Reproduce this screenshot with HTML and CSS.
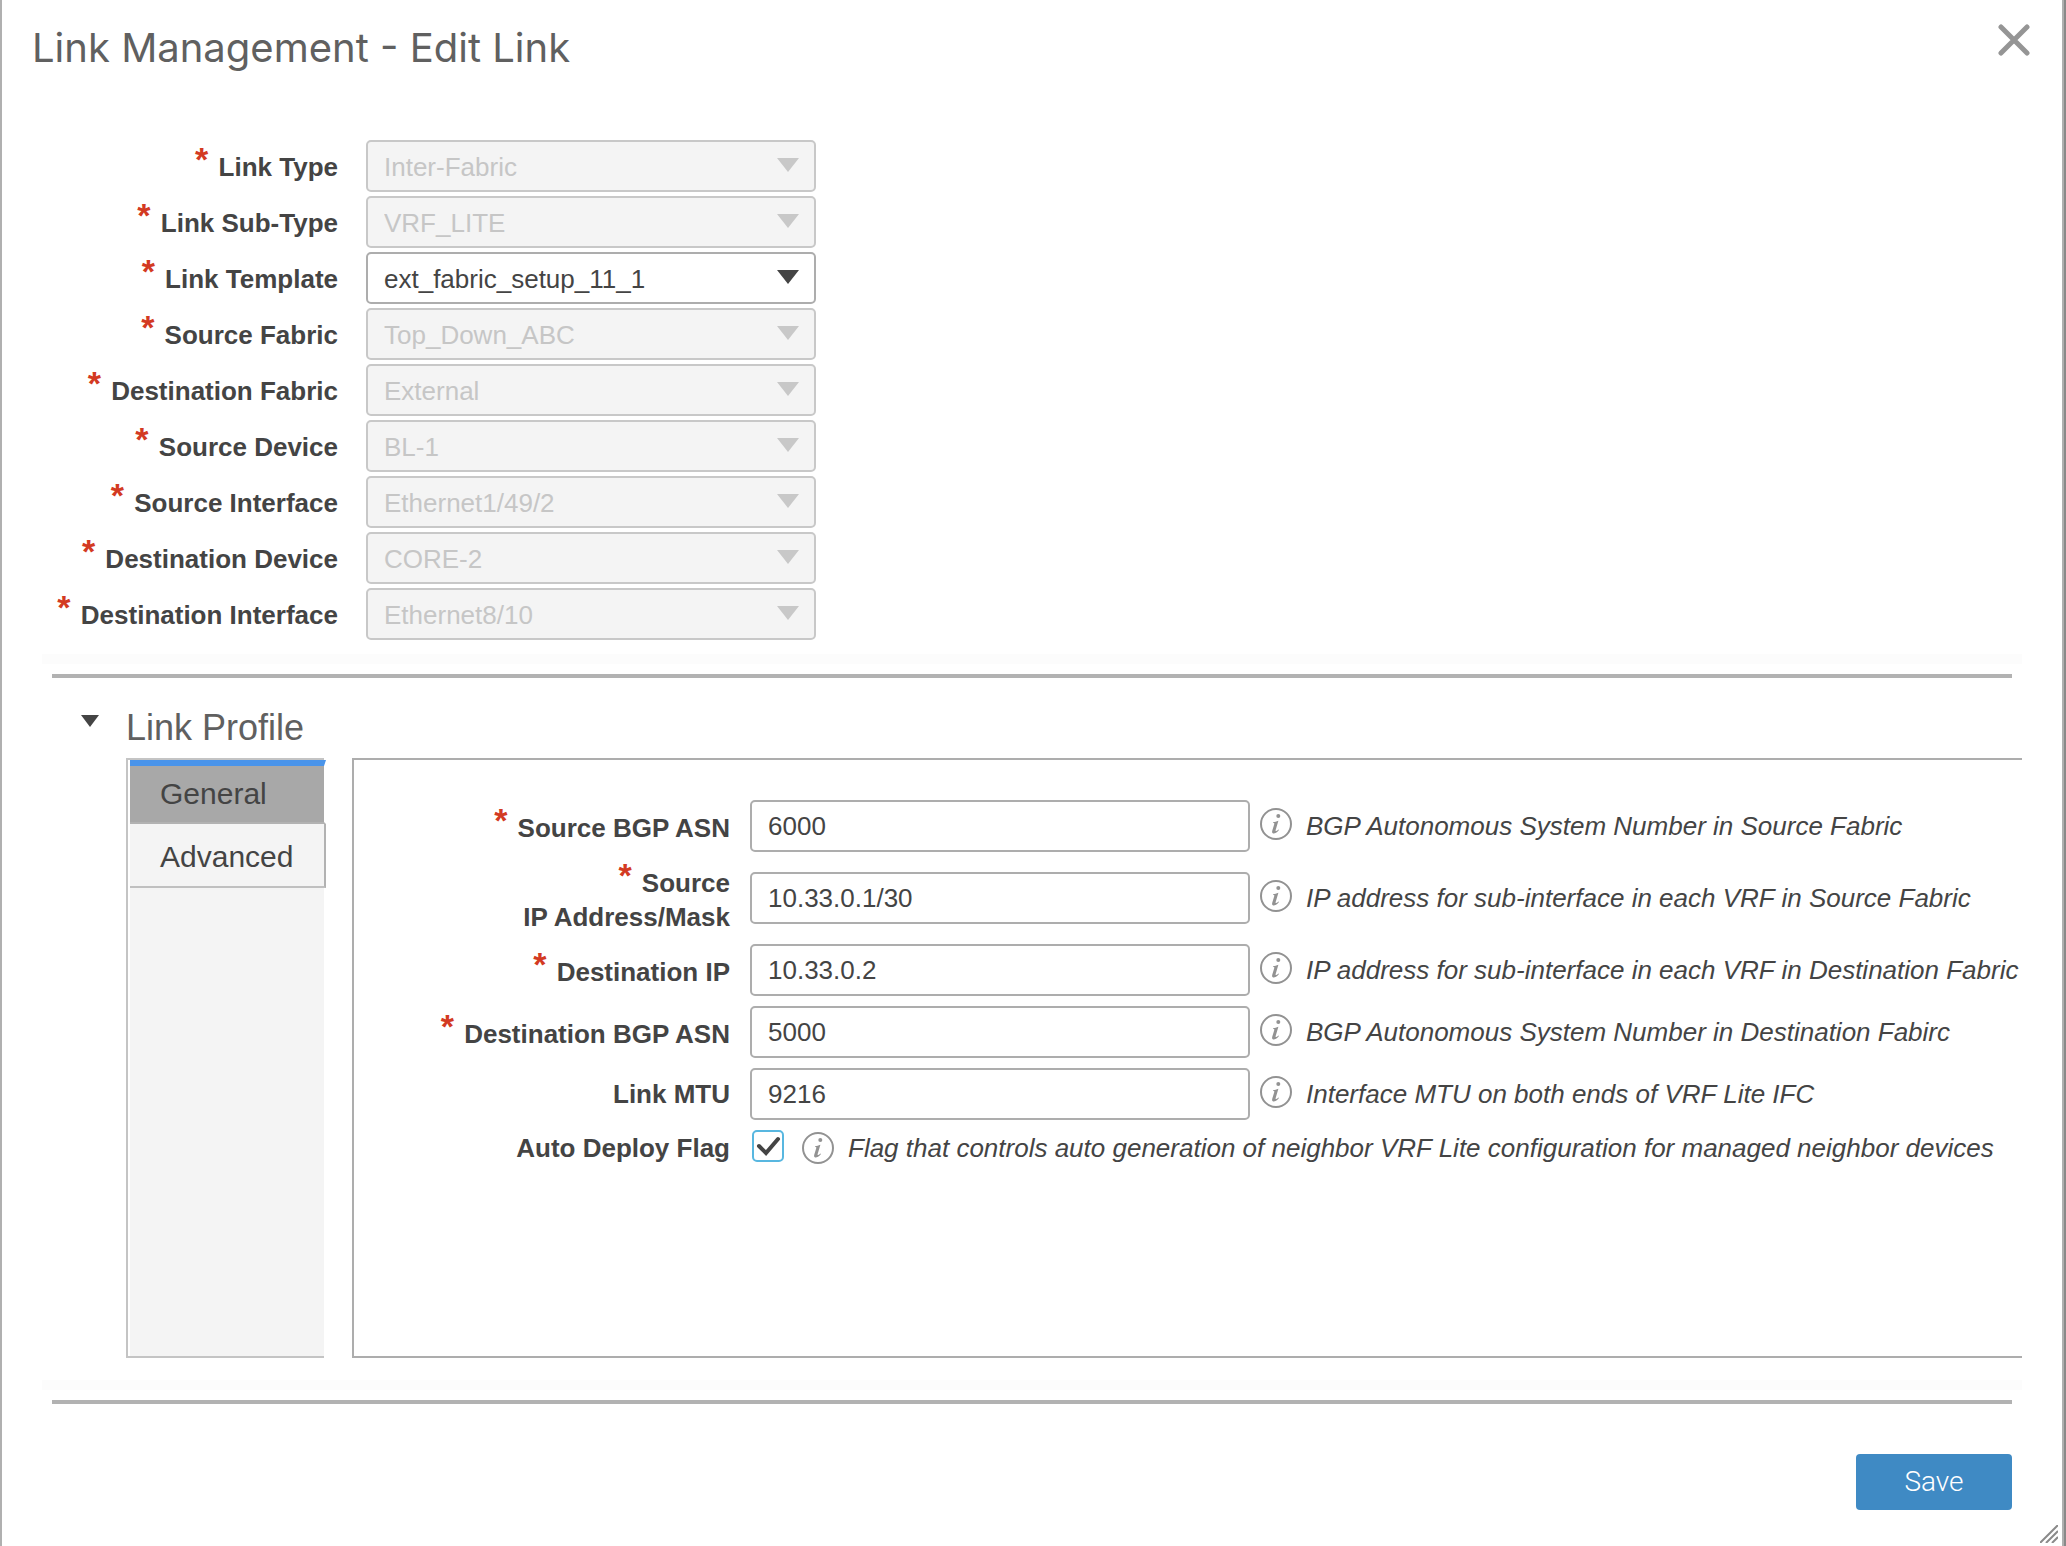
FILE: index.html
```
<!DOCTYPE html>
<html lang="en">
<head>
    <meta charset="utf-8">
    <title>Link Management - Edit Link</title>
    <link rel="stylesheet" href="styles.css">
</head>
<body>
    <svg width="0" height="0" class="icon-defs" aria-hidden="true">
        <symbol id="info" viewBox="0 0 32 32">
            <circle cx="16" cy="16" r="15" fill="#fff" stroke="#929292" stroke-width="2"/>
            <circle cx="18.3" cy="8" r="2" fill="#929292"/>
            <path d="M13.2 14.2C14.8 14.2 16.4 13.7 18.4 12.8L15.6 22.3C15.3 23.4 16 23.6 18.6 21.4L19 22C16.6 24.8 14.8 25.7 13.2 25.5C11.9 25.2 11.9 24 12.3 22.6L14.3 16C14.5 15.2 14.2 15 13 15Z" fill="#929292"/>
        </symbol>
    </svg>

    <div class="dialog">
        <div class="dialog-header">
            <h1>Link Management - Edit Link</h1>
            <button type="button" class="close-button" aria-label="Close">
                <svg width="32" height="32" viewBox="0 0 32 32"><path d="M3 3L29 29M29 3L3 29" stroke="#959595" stroke-width="5" stroke-linecap="round"/></svg>
            </button>
        </div>

        <form class="link-form">
            <div class="link-row">
                <label for="linkType"><span class="star">*</span> Link Type</label>
                <div class="select-box disabled"><select id="linkType" disabled><option>Inter-Fabric</option></select></div>
            </div>
            <div class="link-row">
                <label for="linkSubType"><span class="star">*</span> Link Sub-Type</label>
                <div class="select-box disabled"><select id="linkSubType" disabled><option>VRF_LITE</option></select></div>
            </div>
            <div class="link-row">
                <label for="linkTemplate"><span class="star">*</span> Link Template</label>
                <div class="select-box"><select id="linkTemplate"><option>ext_fabric_setup_11_1</option></select></div>
            </div>
            <div class="link-row">
                <label for="sourceFabric"><span class="star">*</span> Source Fabric</label>
                <div class="select-box disabled"><select id="sourceFabric" disabled><option>Top_Down_ABC</option></select></div>
            </div>
            <div class="link-row">
                <label for="destFabric"><span class="star">*</span> Destination Fabric</label>
                <div class="select-box disabled"><select id="destFabric" disabled><option>External</option></select></div>
            </div>
            <div class="link-row">
                <label for="sourceDevice"><span class="star">*</span> Source Device</label>
                <div class="select-box disabled"><select id="sourceDevice" disabled><option>BL-1</option></select></div>
            </div>
            <div class="link-row">
                <label for="sourceInterface"><span class="star">*</span> Source Interface</label>
                <div class="select-box disabled"><select id="sourceInterface" disabled><option>Ethernet1/49/2</option></select></div>
            </div>
            <div class="link-row">
                <label for="destDevice"><span class="star">*</span> Destination Device</label>
                <div class="select-box disabled"><select id="destDevice" disabled><option>CORE-2</option></select></div>
            </div>
            <div class="link-row">
                <label for="destInterface"><span class="star">*</span> Destination Interface</label>
                <div class="select-box disabled"><select id="destInterface" disabled><option>Ethernet8/10</option></select></div>
            </div>
        </form>

        <div class="band"></div>
        <hr class="divider">

        <div class="profile-header">
            <button type="button" class="toggle-button" aria-label="Toggle Link Profile" aria-expanded="true">
                <svg width="18" height="12" viewBox="0 0 18 12"><path d="M0 0H18L9 12Z" fill="#444"/></svg>
            </button>
            <h2>Link Profile</h2>
        </div>

        <div class="profile">
            <div class="tabs">
                <button type="button" class="tab active">General</button>
                <button type="button" class="tab">Advanced</button>
            </div>

            <form class="panel">
                <div class="panel-row">
                    <label for="sourceAsn"><span class="star">*</span> Source BGP ASN</label>
                    <input type="text" id="sourceAsn" class="text-input" value="6000">
                    <svg class="info"><use href="#info"/></svg>
                    <span class="hint">BGP Autonomous System Number in Source Fabric</span>
                </div>
                <div class="panel-row">
                    <label for="sourceIp"><span class="star">*</span> Source<br>IP Address/Mask</label>
                    <input type="text" id="sourceIp" class="text-input" value="10.33.0.1/30">
                    <svg class="info"><use href="#info"/></svg>
                    <span class="hint">IP address for sub-interface in each VRF in Source Fabric</span>
                </div>
                <div class="panel-row">
                    <label for="destIp"><span class="star">*</span> Destination IP</label>
                    <input type="text" id="destIp" class="text-input" value="10.33.0.2">
                    <svg class="info"><use href="#info"/></svg>
                    <span class="hint">IP address for sub-interface in each VRF in Destination Fabric</span>
                </div>
                <div class="panel-row">
                    <label for="destAsn"><span class="star">*</span> Destination BGP ASN</label>
                    <input type="text" id="destAsn" class="text-input" value="5000">
                    <svg class="info"><use href="#info"/></svg>
                    <span class="hint">BGP Autonomous System Number in Destination Fabirc</span>
                </div>
                <div class="panel-row">
                    <label for="linkMtu">Link MTU</label>
                    <input type="text" id="linkMtu" class="text-input" value="9216">
                    <svg class="info"><use href="#info"/></svg>
                    <span class="hint">Interface MTU on both ends of VRF Lite IFC</span>
                </div>
                <div class="panel-row check-row">
                    <label for="autoDeploy">Auto Deploy Flag</label>
                    <span class="check-box">
                        <input type="checkbox" id="autoDeploy" checked>
                        <svg width="32" height="32" viewBox="0 0 32 32"><path d="M7 16L14 23L26 9" fill="none" stroke="#444" stroke-width="4" stroke-linecap="round"/></svg>
                    </span>
                    <svg class="info"><use href="#info"/></svg>
                    <span class="hint">Flag that controls auto generation of neighbor VRF Lite configuration for managed neighbor devices</span>
                </div>
            </form>
        </div>

        <div class="band"></div>
        <hr class="divider">

        <div class="dialog-footer">
            <button type="button" class="save-button">Save</button>
        </div>

        <svg class="resize-handle" width="18" height="18" viewBox="0 0 18 18"><path d="M0 18L18 0M6 18L18 6M12 18L18 12" stroke="#8a8a8a" stroke-width="2"/></svg>
    </div>
</body>
</html>
```
FILE: styles.css
```
* {
    box-sizing: border-box;
}

body {
    margin: 0;
    padding-right: 2px;
    background: #898989;
    color: #444;
    font-family: "Liberation Sans", Arial, sans-serif;
    font-size: 26px;
    line-height: 34px;
}

h1, h2 {
    margin: 0;
    color: #606060;
    font-weight: 400;
}

button, input, select {
    margin: 0;
    padding: 0;
    border: none;
    background: none;
    color: inherit;
    font: inherit;
}

svg {
    display: block;
}

.icon-defs {
    position: absolute;
}

.dialog {
    position: relative;
    display: flex;
    flex-direction: column;
    min-height: 100vh;
    border-left: 2px solid #b0b0b0;
    border-right: 2px solid #b0b0b0;
    background: #fff;
}

.dialog-header {
    display: flex;
    justify-content: space-between;
    align-items: flex-start;
    padding: 24px 32px 0 30px;
}

.dialog-header h1 {
    font-family: Inter, sans-serif;
    font-size: 40px;
    line-height: 48px;
}

/* link settings */
.link-form {
    display: flex;
    flex-direction: column;
    gap: 4px;
    padding: 68px 50px 14px;
}

.link-row {
    display: flex;
    align-items: center;
    gap: 28px;
}

label {
    font-weight: 700;
    text-align: right;
}

.link-row label {
    width: 286px;
    padding-bottom: 2px;
    white-space: nowrap;
}

.star {
    margin-right: 3px;
    color: #d33a22;
    font-size: 34px;
    line-height: 26px;
    vertical-align: 5px;
}

.select-box {
    position: relative;
    width: 450px;
}

.select-box::after {
    content: "";
    position: absolute;
    top: 18px;
    right: 17px;
    border: 11px solid transparent;
    border-top: 14px solid #444;
    border-bottom: none;
    pointer-events: none;
}

.select-box.disabled::after {
    border-top-color: #c8c8c8;
}

select {
    appearance: none;
    display: block;
    width: 100%;
    height: 52px;
    padding: 1px 48px 0 16px;
    border: 2px solid #adadad;
    border-radius: 5px;
    background: #fff;
}

select:disabled {
    border-color: #c8c8c8;
    background: #f4f4f4;
    color: #c6c6c6;
    opacity: 1;
}

.band {
    height: 10px;
    margin: 0 40px;
    background: #fcfcfc;
}

.divider {
    width: auto;
    height: 4px;
    margin: 10px 50px 0;
    border: none;
    background: #b2b2b2;
}

/* link profile */
.profile-header {
    display: flex;
    gap: 27px;
    padding: 28px 50px 8px 79px;
}

.profile-header h2 {
    font-size: 36px;
    line-height: 44px;
}

.toggle-button {
    align-self: flex-start;
    padding-top: 9px;
}

.profile {
    display: flex;
    flex: 1;
    gap: 28px;
    margin: 0 40px 22px 124px;
}

.tabs {
    flex: none;
    width: 198px;
    padding-left: 2px;
    border: 2px solid #c4c4c4;
    border-right: none;
    background: linear-gradient(90deg, #fff 2px, #f4f4f4 2px);
}

.tab {
    display: block;
    width: 196px;
    height: 64px;
    padding: 4px 0 0 30px;
    border-right: 2px solid #b2b2b2;
    border-bottom: 2px solid #c0c0c0;
    font-size: 30px;
    text-align: left;
}

.tab.active {
    padding-top: 0;
    border-top: 6px solid #4a94ea;
    border-right-color: transparent;
    border-bottom-color: #b2b2b2;
    background: #a8a8a8;
    background-clip: padding-box;
}

.panel {
    flex: 1;
    min-width: 0;
    padding-top: 35px;
    border: 2px solid #adadad;
    border-right: none;
}

.panel-row {
    display: flex;
    align-items: center;
    padding: 5px 0;
    white-space: nowrap;
}

.panel-row label {
    flex: none;
    width: 376px;
    margin-right: 20px;
}

.text-input {
    flex: none;
    width: 500px;
    height: 52px;
    padding: 1px 16px 0;
    border: 2px solid #adadad;
    border-radius: 5px;
    background: #fff;
}

.info {
    flex: none;
    width: 32px;
    height: 32px;
    margin: 0 14px 4px 10px;
}

.check-row .info {
    margin: 0 14px 0 18px;
}

.hint {
    font-style: italic;
}

.check-box {
    display: grid;
    margin-left: 2px;
    margin-bottom: 4px;
}

.check-box input,
.check-box svg {
    grid-area: 1 / 1;
}

.check-box input {
    appearance: none;
    width: 32px;
    height: 32px;
    border: 2px solid #58b7e0;
    border-radius: 5px;
}

.check-box svg {
    pointer-events: none;
}

.dialog-footer {
    display: flex;
    justify-content: flex-end;
    padding: 50px 50px 36px;
}

.save-button {
    width: 156px;
    height: 56px;
    border-radius: 4px;
    background: #3f8ac4;
    color: #fff;
    font-family: Roboto, sans-serif;
    font-size: 28px;
    font-weight: 300;
}

.resize-handle {
    position: absolute;
    right: 4px;
    bottom: 3px;
}
```
